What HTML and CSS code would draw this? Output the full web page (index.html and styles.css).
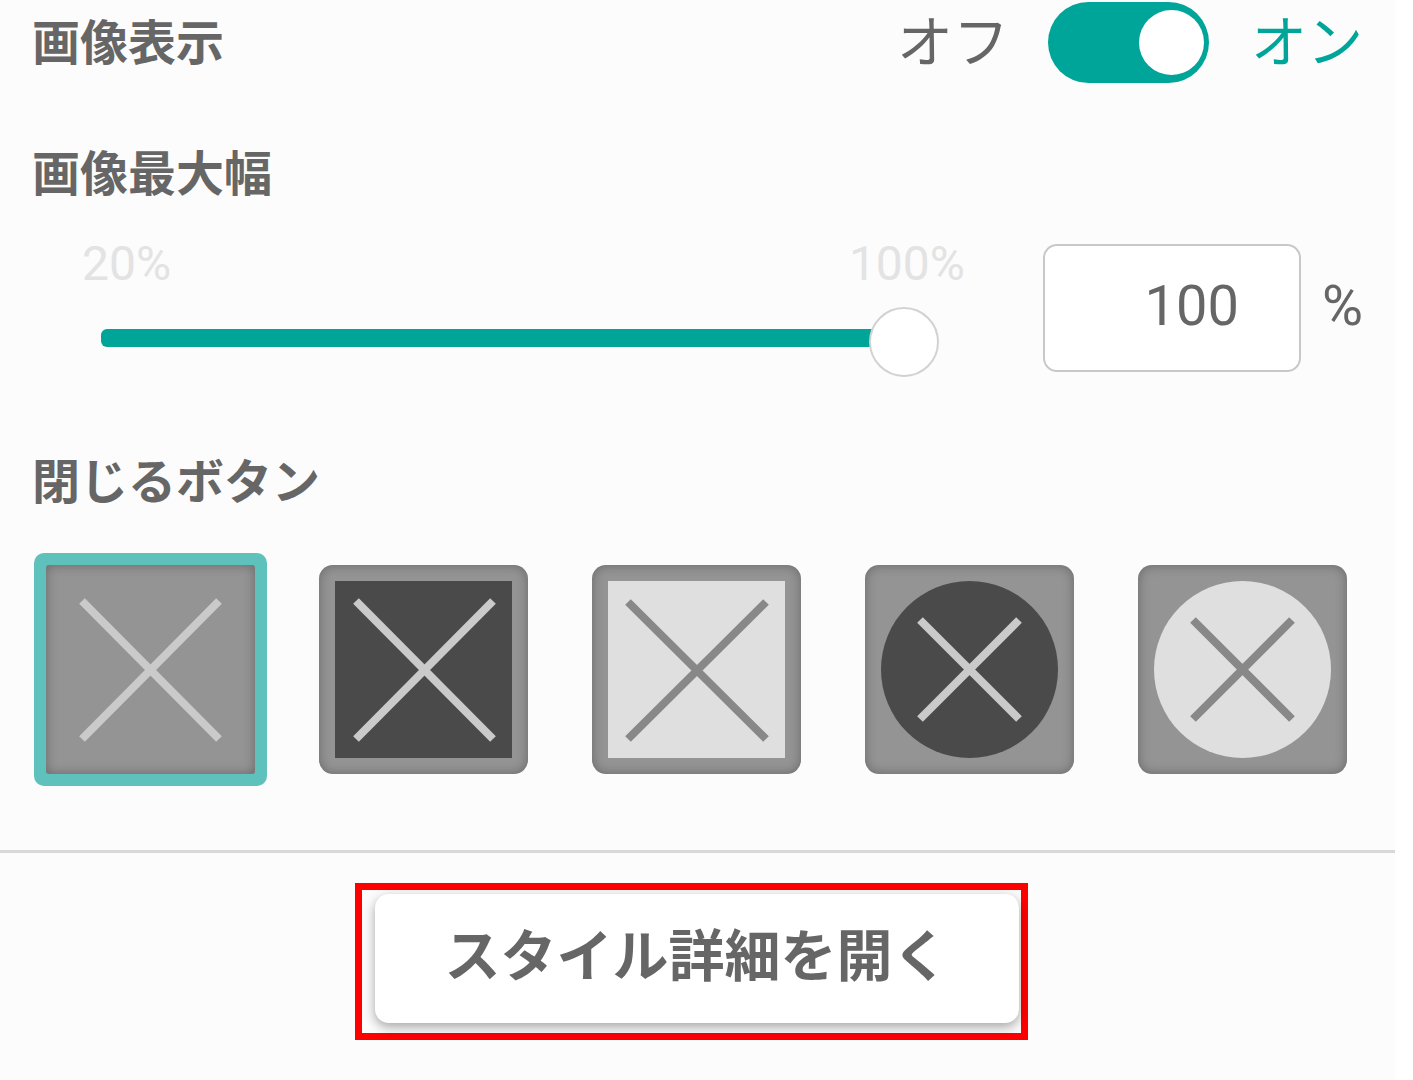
FILE: index.html
```html
<!DOCTYPE html>
<html lang="ja">
<head>
<meta charset="utf-8">
<meta name="viewport" content="width=device-width, initial-scale=1">
<title>スタイル設定</title>
<link rel="stylesheet" href="styles.css">
</head>
<body>
<main class="panel">
  <section class="row">
    <h2 class="heading" id="show-label">画像表示</h2>
    <label class="toggle">
      <span class="toggle-text">オフ</span>
      <input class="switch" type="checkbox" role="switch" aria-labelledby="show-label" checked>
      <span class="toggle-text toggle-text-on">オン</span>
    </label>
  </section>

  <section class="width-section">
    <h2 class="heading" id="width-label">画像最大幅</h2>
    <div class="width-controls">
      <div class="slider-box">
        <div class="scale"><span>20%</span><span>100%</span></div>
        <input class="slider" type="range" min="20" max="100" value="100" aria-labelledby="width-label">
      </div>
      <label class="amount">
        <input class="amount-input" type="text" inputmode="numeric" value="100" aria-labelledby="width-label">
        <span class="amount-unit">%</span>
      </label>
    </div>
  </section>

  <section class="close-section">
    <h2 class="heading" id="close-label">閉じるボタン</h2>
    <div class="swatches" role="radiogroup" aria-labelledby="close-label">
      <label class="swatch">
        <input class="swatch-radio" type="radio" name="close" aria-label="枠なし" checked>
        <svg class="icon" viewBox="0 0 209 209"><path class="light-line" d="M36 36 173 174M173 36 36 174"/></svg>
      </label>
      <label class="swatch">
        <input class="swatch-radio" type="radio" name="close" aria-label="四角・黒">
        <svg class="icon" viewBox="0 0 209 209"><path class="dark-fill" d="M16 16h177v177H16z"/><path class="light-line" d="M37 36 174 174M174 36 37 174"/></svg>
      </label>
      <label class="swatch">
        <input class="swatch-radio" type="radio" name="close" aria-label="四角・白">
        <svg class="icon" viewBox="0 0 209 209"><path class="light-fill" d="M16 16h177v177H16z"/><path class="dark-line" d="M36 37 174 174M174 37 36 174"/></svg>
      </label>
      <label class="swatch">
        <input class="swatch-radio" type="radio" name="close" aria-label="丸・黒">
        <svg class="icon" viewBox="0 0 209 209"><circle class="dark-fill" cx="104.500" cy="104.500" r="88.500"/><path class="light-line" d="M55 55 154 154M154 55 55 154"/></svg>
      </label>
      <label class="swatch">
        <input class="swatch-radio" type="radio" name="close" aria-label="丸・白">
        <svg class="icon" viewBox="0 0 209 209"><circle class="light-fill" cx="104.500" cy="104.500" r="88.500"/><path class="dark-line" d="M55 55 154 154M154 55 55 154"/></svg>
      </label>
    </div>
  </section>

  <footer class="footer">
    <div class="highlight">
      <button class="open-button" type="button">スタイル詳細を開く</button>
    </div>
  </footer>
</main>
</body>
</html>
```
FILE: styles.css
```css
* {
  box-sizing: border-box;
}

body {
  margin: 0;
  background: #fff;
  color: #666;
  font-family: Roboto, "Noto Sans CJK JP", sans-serif;
}

.panel {
  min-height: 100vh;
  margin-right: 18px;
  padding-top: 2px;
  background: #fcfcfc;
}

.heading {
  margin: 0;
  font-size: 48px;
  line-height: 56px;
  font-weight: 700;
}

/* Image on/off */
.row {
  display: flex;
  align-items: center;
  justify-content: space-between;
  padding: 0 32px;
}

.row .heading {
  padding-top: 3px;
}

.toggle {
  display: flex;
  align-items: center;
  gap: 39px;
}

.toggle-text {
  font-size: 56px;
  line-height: 80px;
}

.toggle-text-on {
  color: #00a59a;
}

.switch {
  appearance: none;
  display: flex;
  align-items: center;
  justify-content: flex-end;
  width: 161px;
  height: 81px;
  margin: 0 3px 0 0;
  padding: 0 5px;
  border-radius: 41px;
  background: #00a59a;
}

.switch::before {
  content: "";
  width: 65px;
  height: 65px;
  border-radius: 50%;
  background: #fff;
}

.switch:not(:checked) {
  justify-content: flex-start;
  background: #c8c8c8;
}

/* Maximum width */
.width-section {
  padding: 64px 32px 0;
}

.width-controls {
  display: flex;
  align-items: flex-start;
  gap: 78px;
  padding: 33px 0 0 50px;
}

.slider-box {
  flex: 1;
}

.scale {
  display: flex;
  justify-content: space-between;
  color: #e3e3e3;
  font-size: 48px;
  line-height: 56px;
}

.slider {
  appearance: none;
  display: block;
  width: calc(100% - 45px);
  height: 66px;
  margin: 13px 26px 12px 19px;
  background: none;
}

.slider::-webkit-slider-runnable-track {
  height: 18px;
  border-radius: 6px;
  background: linear-gradient(#00a59a, #00a59a) no-repeat left / calc(100% - 20px) 100%;
}

.slider::-webkit-slider-thumb {
  appearance: none;
  width: 70px;
  height: 70px;
  margin-top: -22px;
  border: 2px solid #d2d2d2;
  border-radius: 50%;
  background: #fff;
}

.amount {
  display: flex;
  align-items: center;
  gap: 21px;
  margin-top: 8px;
  font-size: 56px;
}

.amount-input {
  width: 258px;
  height: 128px;
  padding: 0 60px 4px 16px;
  border: 2px solid #c8c8c8;
  border-radius: 14px;
  background: #fff;
  color: inherit;
  font: inherit;
  text-align: right;
}

.amount-unit {
  padding-bottom: 4px;
}

/* Close button style */
.close-section {
  padding: 72px 48px 76px 46px;
}

.close-section .heading {
  margin-left: -14px;
}

.swatches {
  display: flex;
  justify-content: space-between;
  padding-top: 54px;
}

.swatch {
  display: block;
  position: relative;
  width: 209px;
  height: 209px;
  border-radius: 14px;
  background: #949494;
  box-shadow: inset 0 0 12px rgba(0, 0, 0, 0.3);
}

.swatch:has(:checked) {
  border-radius: 3px;
  box-shadow: 0 0 0 12px #5ec1bb, inset 0 0 12px rgba(0, 0, 0, 0.3);
}

.swatch-radio {
  appearance: none;
  position: absolute;
  inset: 0;
  margin: 0;
}

.icon {
  display: block;
  width: 100%;
  height: 100%;
}

.dark-fill {
  fill: #4a4a4a;
}

.light-fill {
  fill: #dfdfdf;
}

.light-line,
.dark-line {
  fill: none;
  stroke: #cacaca;
  stroke-width: 8px;
}

.dark-line {
  stroke: #888;
}

/* Footer */
.footer {
  display: flex;
  justify-content: center;
  padding: 30px 13px 40px 0;
  border-top: 3px solid #d8d8d8;
}

.highlight {
  padding: 4px 2px 10px 13px;
  border: 7px solid #f00;
}

.open-button {
  height: 129px;
  padding: 0 70px 14px;
  border: 0;
  border-radius: 14px;
  background: #fff;
  box-shadow: 0 4px 12px rgba(0, 0, 0, 0.35);
  color: inherit;
  font: inherit;
  font-size: 56px;
  font-weight: 700;
}
```
